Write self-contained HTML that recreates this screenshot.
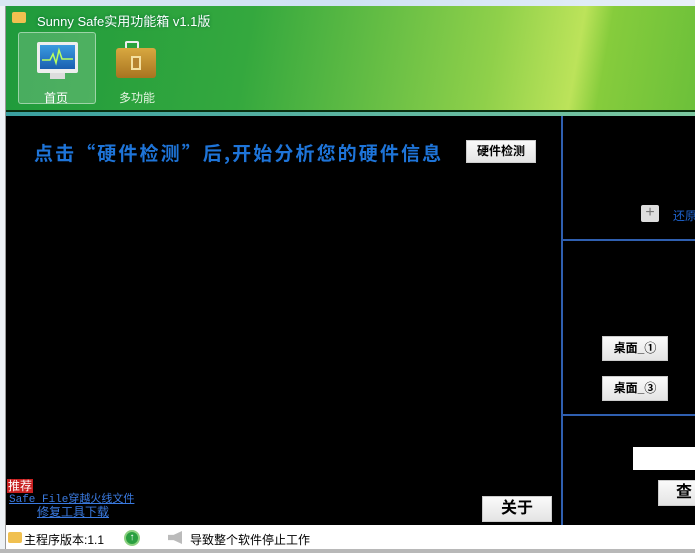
<!DOCTYPE html>
<html><head><meta charset="utf-8"><style>
*{margin:0;padding:0;box-sizing:border-box}
body{width:695px;height:553px;overflow:hidden;position:relative;background:#fff;font-family:"Liberation Sans","Noto Sans CJK SC",sans-serif}
.a{position:absolute;white-space:nowrap}
.btn{position:absolute;background:linear-gradient(#fafafa,#e4e4e4);color:#000;font-weight:bold;text-align:center;font-size:13px;border:1px solid #ccc;white-space:nowrap}
</style></head><body>
<div class="a" style="left:0;top:0;width:6px;height:553px;background:#eef2f6;border-right:1px solid #999"></div>
<div class="a" style="left:0;top:0;width:695px;height:6px;background:linear-gradient(90deg,#d8e6f2,#cfe2f4,#e8f0f8)"></div>
<div class="a" style="left:6px;top:6px;width:689px;height:105px;background:linear-gradient(100deg,#1f9a3c 0%,#34a83e 35%,#8fd04a 70%,#bce35a 82%,#86cc3c 86%,#6cc03a 100%)"></div>
<div class="a" style="left:6px;top:110px;width:689px;height:2px;background:#0a3010"></div>
<div class="a" style="left:6px;top:112px;width:689px;height:4px;background:linear-gradient(90deg,#3aa0a0,#7cc8a0)"></div>
<div class="a" style="left:12px;top:12px;width:14px;height:11px;background:#f0c050;border-radius:2px"></div>
<div class="a" style="left:37px;top:11px;color:#fff;font-size:13px;text-shadow:0 0 3px #063">Sunny Safe实用功能箱 v1.1版</div>
<div class="a" style="left:18px;top:32px;width:78px;height:72px;background:rgba(255,255,255,.18);border:1px solid rgba(255,255,255,.45);border-radius:3px"></div>
<div class="a" style="left:37px;top:42px;width:41px;height:31px;background:#eee;border-radius:2px"></div>
<div class="a" style="left:40px;top:45px;width:35px;height:24px;background:linear-gradient(#3a9be0,#1a5fb0)"></div>
<svg class="a" style="left:40px;top:45px" width="35" height="24"><path d="M2 15 L10 15 L13 9 L16 18 L19 5 L22 14 L33 14" stroke="#b8ff60" stroke-width="1.5" fill="none"/></svg>
<div class="a" style="left:50px;top:73px;width:15px;height:6px;background:#ddd"></div>
<div class="a" style="left:44px;top:89px;color:#fff;font-size:12px">首页</div>
<div class="a" style="left:125px;top:41px;width:14px;height:8px;border:2px solid #eee;border-bottom:none;border-radius:2px"></div>
<div class="a" style="left:116px;top:48px;width:40px;height:30px;background:linear-gradient(#d8a840,#a87420);border-radius:3px"></div>
<div class="a" style="left:131px;top:56px;width:10px;height:14px;border:2px solid #f4e0a0;background:#b88430"></div>
<div class="a" style="left:119px;top:89px;color:#e4f4e0;font-size:12px">多功能</div>
<div class="a" style="left:6px;top:116px;width:689px;height:409px;background:#000"></div>
<div class="a" style="left:561px;top:116px;width:2px;height:409px;background:#2f5fb0"></div>
<div class="a" style="left:563px;top:239px;width:132px;height:2px;background:#2f5fb0"></div>
<div class="a" style="left:563px;top:414px;width:132px;height:2px;background:#2f5fb0"></div>
<div class="a" style="left:34px;top:141px;color:#1e74d8;font-size:19px;font-weight:bold;font-family:'Noto Sans CJK SC',sans-serif;letter-spacing:2.1px;line-height:24px">点击“硬件检测”后,开始分析您的硬件信息</div>
<div class="btn" style="left:466px;top:140px;width:70px;height:23px;line-height:21px;font-size:12px">硬件检测</div>
<div class="a" style="left:641px;top:205px;width:18px;height:17px;background:#ddd;border-radius:2px;text-align:center;line-height:16px;font-size:16px;color:#777">+</div>
<div class="a" style="left:673px;top:207px;color:#1e64d0;font-size:12px">还原</div>
<div class="btn" style="left:602px;top:336px;width:66px;height:25px;line-height:23px;font-size:12px">桌面_①</div>
<div class="btn" style="left:602px;top:376px;width:66px;height:25px;line-height:23px;font-size:12px">桌面_③</div>
<div class="a" style="left:633px;top:447px;width:62px;height:23px;background:#fff"></div>
<div class="btn" style="left:658px;top:480px;width:40px;height:26px;line-height:24px;font-size:16px;text-align:left;padding-left:17px">查</div>
<div class="btn" style="left:482px;top:496px;width:70px;height:26px;line-height:24px;font-size:16px">关于</div>
<div class="a" style="left:7px;top:479px;background:#c82020;color:#fff;font-size:12px;line-height:14px;padding:0 1px">推荐</div>
<div class="a" style="left:9px;top:494px;color:#3a7ae0;font-size:11px;text-decoration:underline;font-family:'Liberation Mono','Noto Sans CJK SC',monospace;line-height:13px;letter-spacing:0px">Safe File穿越火线文件</div>
<div class="a" style="left:37px;top:506px;color:#3a7ae0;font-size:12px;text-decoration:underline;line-height:13px">修复工具下载</div>
<div class="a" style="left:6px;top:525px;width:689px;height:24px;background:#fff"></div>
<div class="a" style="left:0;top:549px;width:695px;height:4px;background:#b8b8b8"></div>
<div class="a" style="left:8px;top:532px;width:14px;height:11px;background:#f0c050;border-radius:2px"></div>
<div class="a" style="left:24px;top:531px;font-size:12px;color:#000">主程序版本:1.1</div>
<div class="a" style="left:124px;top:530px;width:16px;height:16px;border-radius:50%;background:#2aa040;border:2px solid #8cd080;color:#fff;font-size:10px;text-align:center;line-height:12px">↑</div>
<div class="a" style="left:168px;top:531px;width:14px;height:13px;background:#bbb;clip-path:polygon(0 30%,40% 30%,100% 0,100% 100%,40% 70%,0 70%)"></div>
<div class="a" style="left:190px;top:531px;font-size:12px;color:#000">导致整个软件停止工作</div>
</body></html>
